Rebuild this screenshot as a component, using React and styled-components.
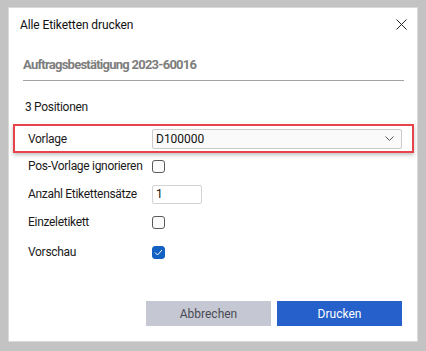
import React from "react";
import styled, { createGlobalStyle } from "styled-components";

const Global = createGlobalStyle`
  html, body { margin: 0; padding: 0; }
  body {
    background: #c3c3c3;
    width: 426px;
    height: 351px;
    overflow: hidden;
    font-family: Roboto, "Liberation Sans", sans-serif;
    -webkit-font-smoothing: antialiased;
  }
`;

const Dialog = styled.div`
  box-sizing: border-box;
  margin: 7px 0 0 8px;
  width: 410px;
  height: 335px;
  background: #ffffff;
  border: 1px solid #d9d9d9;
  display: flex;
  flex-direction: column;
`;

const Header = styled.div`
  height: 33px;
  display: flex;
  align-items: center;
  justify-content: space-between;
  padding: 0 10px 0 11px;
`;

const Title = styled.div`
  font-size: 12px;
  letter-spacing: -0.1px;
  color: #111;
`;

const Close = styled.button`
  border: 0;
  background: none;
  padding: 0;
  width: 11px;
  height: 11px;
  display: flex;
  cursor: pointer;
`;

const Subtitle = styled.div`
  margin: 0 13px 0 14px;
  padding: 15px 0 6px;
  border-bottom: 1px solid #a3a3a3;
  font-size: 13px;
  line-height: 18px;
  font-weight: 700;
  letter-spacing: -0.75px;
  color: #7d7d7d;
`;

const Info = styled.div`
  margin: 17px 0 0 16px;
  font-size: 12px;
  line-height: 18px;
  letter-spacing: -0.3px;
  color: #1a1a1a;
`;

const Highlight = styled.div`
  margin: 8px 0 0 4px;
  width: 401px;
  box-sizing: border-box;
  border: 2px solid #e8424a;
  box-shadow: 0 2px 4px rgba(0, 0, 0, 0.25);
`;

const Row = styled.div`
  display: grid;
  grid-template-columns: 124px 1fr;
  align-items: center;
  height: ${(p) => p.$h}px;
  padding: 0 ${(p) => p.$pr || 0}px 0 ${(p) => p.$pl}px;
  font-size: 12px;
  letter-spacing: -0.3px;
  color: #1a1a1a;
`;

const Select = styled.div`
  box-sizing: border-box;
  height: 20px;
  border: 1px solid #cbcbcb;
  border-radius: 2px;
  background: #fafafa;
  display: flex;
  align-items: center;
  justify-content: space-between;
  padding: 0 7px 0 3px;
  font-size: 12px;
  letter-spacing: 0;
  color: #111;
`;

const Check = styled.span`
  box-sizing: border-box;
  width: 13px;
  height: 13px;
  border-radius: 3px;
  border: 1px solid ${(p) => (p.$on ? "#1361c2" : "#5a5a5a")};
  background: ${(p) => (p.$on ? "#1361c2" : "#fbfbfb")};
  display: flex;
  align-items: center;
  justify-content: center;
`;

const Input = styled.div`
  box-sizing: border-box;
  width: 50px;
  height: 19px;
  border: 1px solid #d3d3d3;
  border-radius: 2px;
  background: #fff;
  display: flex;
  align-items: center;
  padding-left: 3px;
  font-size: 12px;
  color: #111;
`;

const Footer = styled.div`
  margin-top: auto;
  display: flex;
  justify-content: flex-end;
  gap: 6px;
  padding: 0 15px 15px 0;
`;

const Button = styled.button`
  width: 125px;
  height: 25px;
  border: 0;
  font-family: inherit;
  font-size: 12px;
  background: ${(p) => (p.$primary ? "#2660cb" : "#c5c8d2")};
  color: ${(p) => (p.$primary ? "#ffffff" : "#4a4a52")};
  cursor: pointer;
`;

export default function App() {
  return (
    <>
      <Global />
      <Dialog>
        <Header>
          <Title>Alle Etiketten drucken</Title>
          <Close aria-label="Schließen">
            <svg width="11" height="11" viewBox="0 0 11 11">
              <path d="M0.5 0.5L10.5 10.5M10.5 0.5L0.5 10.5" stroke="#222" strokeWidth="1" />
            </svg>
          </Close>
        </Header>
        <Subtitle>Auftragsbestätigung 2023-60016</Subtitle>
        <Info>3 Positionen</Info>
        <Highlight>
          <Row $h={25} $pl={13} $pr={10}>
            <span>Vorlage</span>
            <Select>
              <span>D100000</span>
              <svg width="9" height="5" viewBox="0 0 9 5">
                <path d="M0.5 0.5L4.5 4.5L8.5 0.5" stroke="#555" fill="none" strokeWidth="1" />
              </svg>
            </Select>
          </Row>
        </Highlight>
        <Row $h={26} $pl={19}>
          <span>Pos-Vorlage ignorieren</span>
          <Check />
        </Row>
        <Row $h={30} $pl={19}>
          <span>Anzahl Etikettensätze</span>
          <Input>1</Input>
        </Row>
        <Row $h={26} $pl={19}>
          <span>Einzeletikett</span>
          <Check />
        </Row>
        <Row $h={34} $pl={19}>
          <span>Vorschau</span>
          <Check $on>
            <svg width="9" height="7" viewBox="0 0 9 7">
              <path d="M1 3.5L3.5 6L8 1" stroke="#fff" fill="none" strokeWidth="1" />
            </svg>
          </Check>
        </Row>
        <Footer>
          <Button>Abbrechen</Button>
          <Button $primary>Drucken</Button>
        </Footer>
      </Dialog>
    </>
  );
}
